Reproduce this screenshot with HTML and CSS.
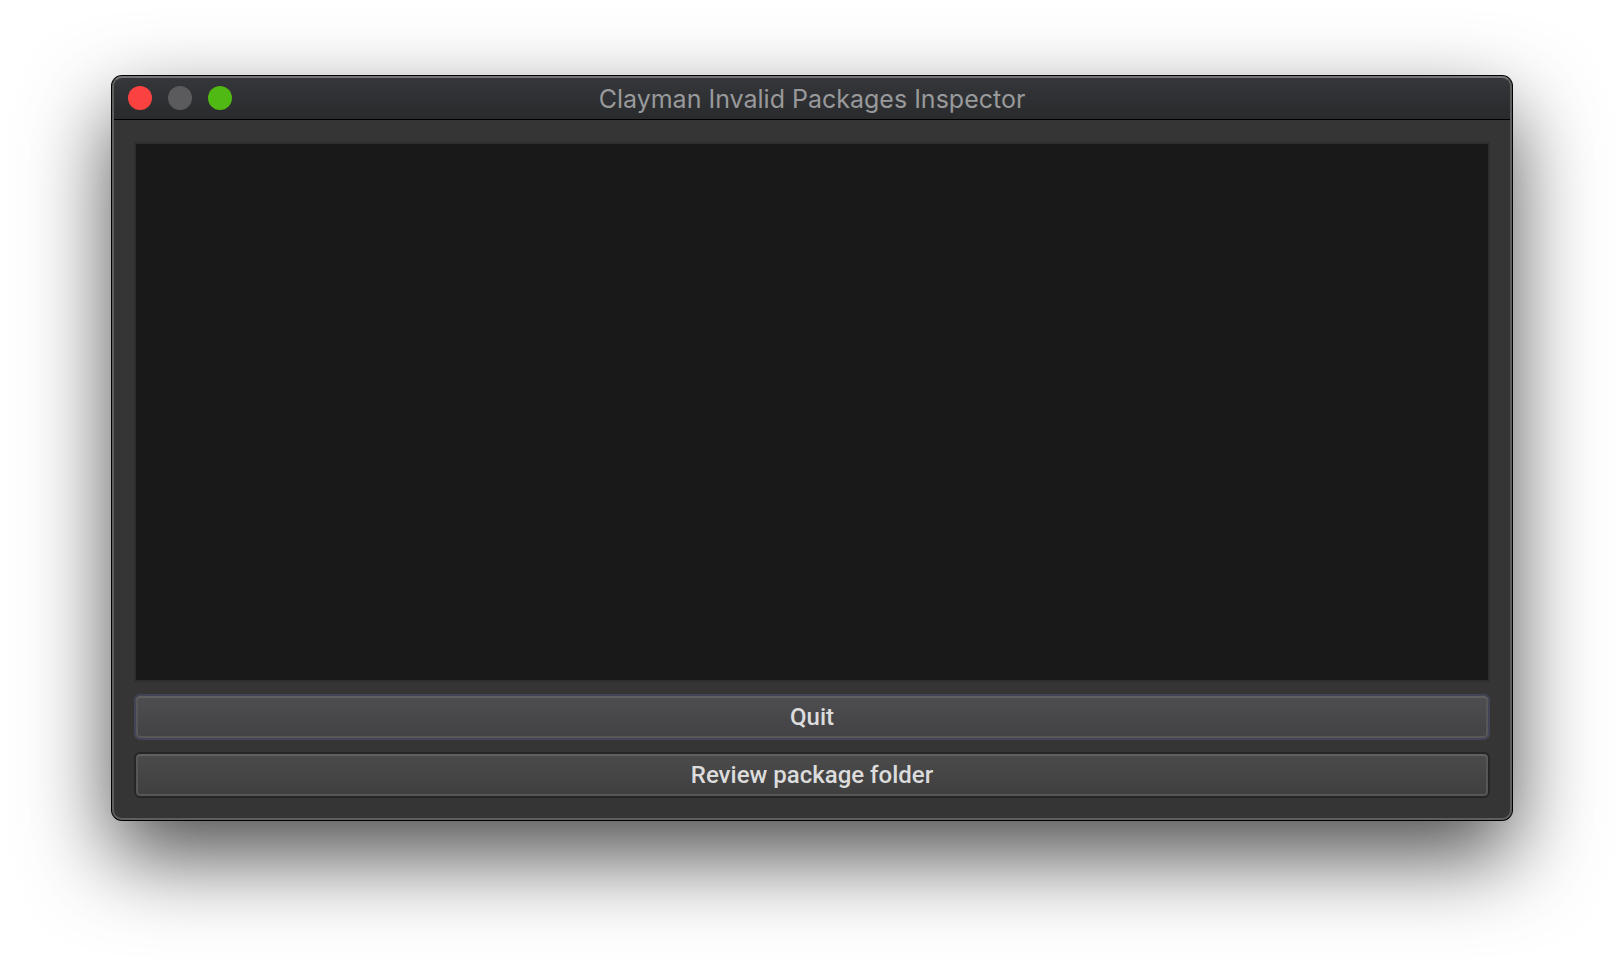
FILE: index.html
```html
<!DOCTYPE html>
<html lang="en">
<head>
  <meta charset="utf-8">
  <meta name="viewport" content="width=device-width, initial-scale=1">
  <title>Clayman Invalid Packages Inspector</title>
  <link rel="stylesheet" href="styles.css">
</head>
<body>
  <main class="window">
    <header class="titlebar">
      <div class="controls">
        <button class="control control-close" type="button" aria-label="Close"></button>
        <button class="control control-minimize" type="button" aria-label="Minimize" disabled></button>
        <button class="control control-zoom" type="button" aria-label="Zoom"></button>
      </div>
      <h1 class="title">Clayman Invalid Packages Inspector</h1>
    </header>
    <div class="content">
      <textarea class="log" aria-label="Invalid packages" readonly></textarea>
      <button class="action action-default" type="button">Quit</button>
      <button class="action" type="button">Review package folder</button>
    </div>
  </main>
</body>
</html>
```

FILE: styles.css
```css
* {
  box-sizing: border-box;
}

body {
  display: flex;
  min-height: 100vh;
  margin: 0;
  padding: 76px 112px 148px;
  background: #fff;
}

.window {
  position: relative;
  display: flex;
  flex: 1;
  flex-direction: column;
  border-radius: 10px;
  background: #353535;
  box-shadow: 0 0 0 1px #000, 0 36px 86px rgba(0, 0, 0, 0.7);
}

/* Light rim drawn over the title bar and the content. */
.window::after {
  position: absolute;
  inset: 0;
  border: 2px solid #5e5e5e;
  border-top-color: #747577;
  border-radius: inherit;
  content: "";
  pointer-events: none;
}

.titlebar {
  display: grid;
  grid-template-columns: 1fr auto 1fr;
  align-items: center;
  height: 44px;
  padding: 0 16px;
  border-bottom: 1px solid #000;
  border-radius: 10px 10px 0 0;
  background: linear-gradient(#36373b, #292a2c);
}

.controls {
  display: flex;
  gap: 16px;
}

.control {
  width: 24px;
  height: 24px;
  padding: 0;
  border: 0;
  border-radius: 50%;
}

.control-close {
  background: #fc4141;
}

.control-minimize {
  background: #5b5b5d;
}

.control-zoom {
  background: #50b914;
}

.title {
  margin: 0;
  padding-top: 2px;
  color: #98999b;
  font: 400 25px/32px Inter, sans-serif;
}

.content {
  display: flex;
  flex: 1;
  flex-direction: column;
  gap: 12px;
  padding: 22px;
}

.log {
  flex: 1;
  width: 100%;
  margin: 0;
  border: 2px solid #2e2e2e;
  outline: 0;
  background: #191919;
  color: #dcdcdc;
  font: 24px/28px Roboto, sans-serif;
  resize: none;
}

.action {
  height: 46px;
  padding: 0;
  border: 2px solid #262626;
  border-radius: 6px;
  background: linear-gradient(#4b4b4b, #3f3f3f) padding-box;
  box-shadow: inset 0 2px 0 #606060, inset 0 0 0 2px #575757;
  color: #dcdcdc;
  font: 500 24px/28px Roboto, sans-serif;
}

.action-default {
  border-color: #434458;
  background: linear-gradient(#4e4e50, #424244) padding-box;
}
```
